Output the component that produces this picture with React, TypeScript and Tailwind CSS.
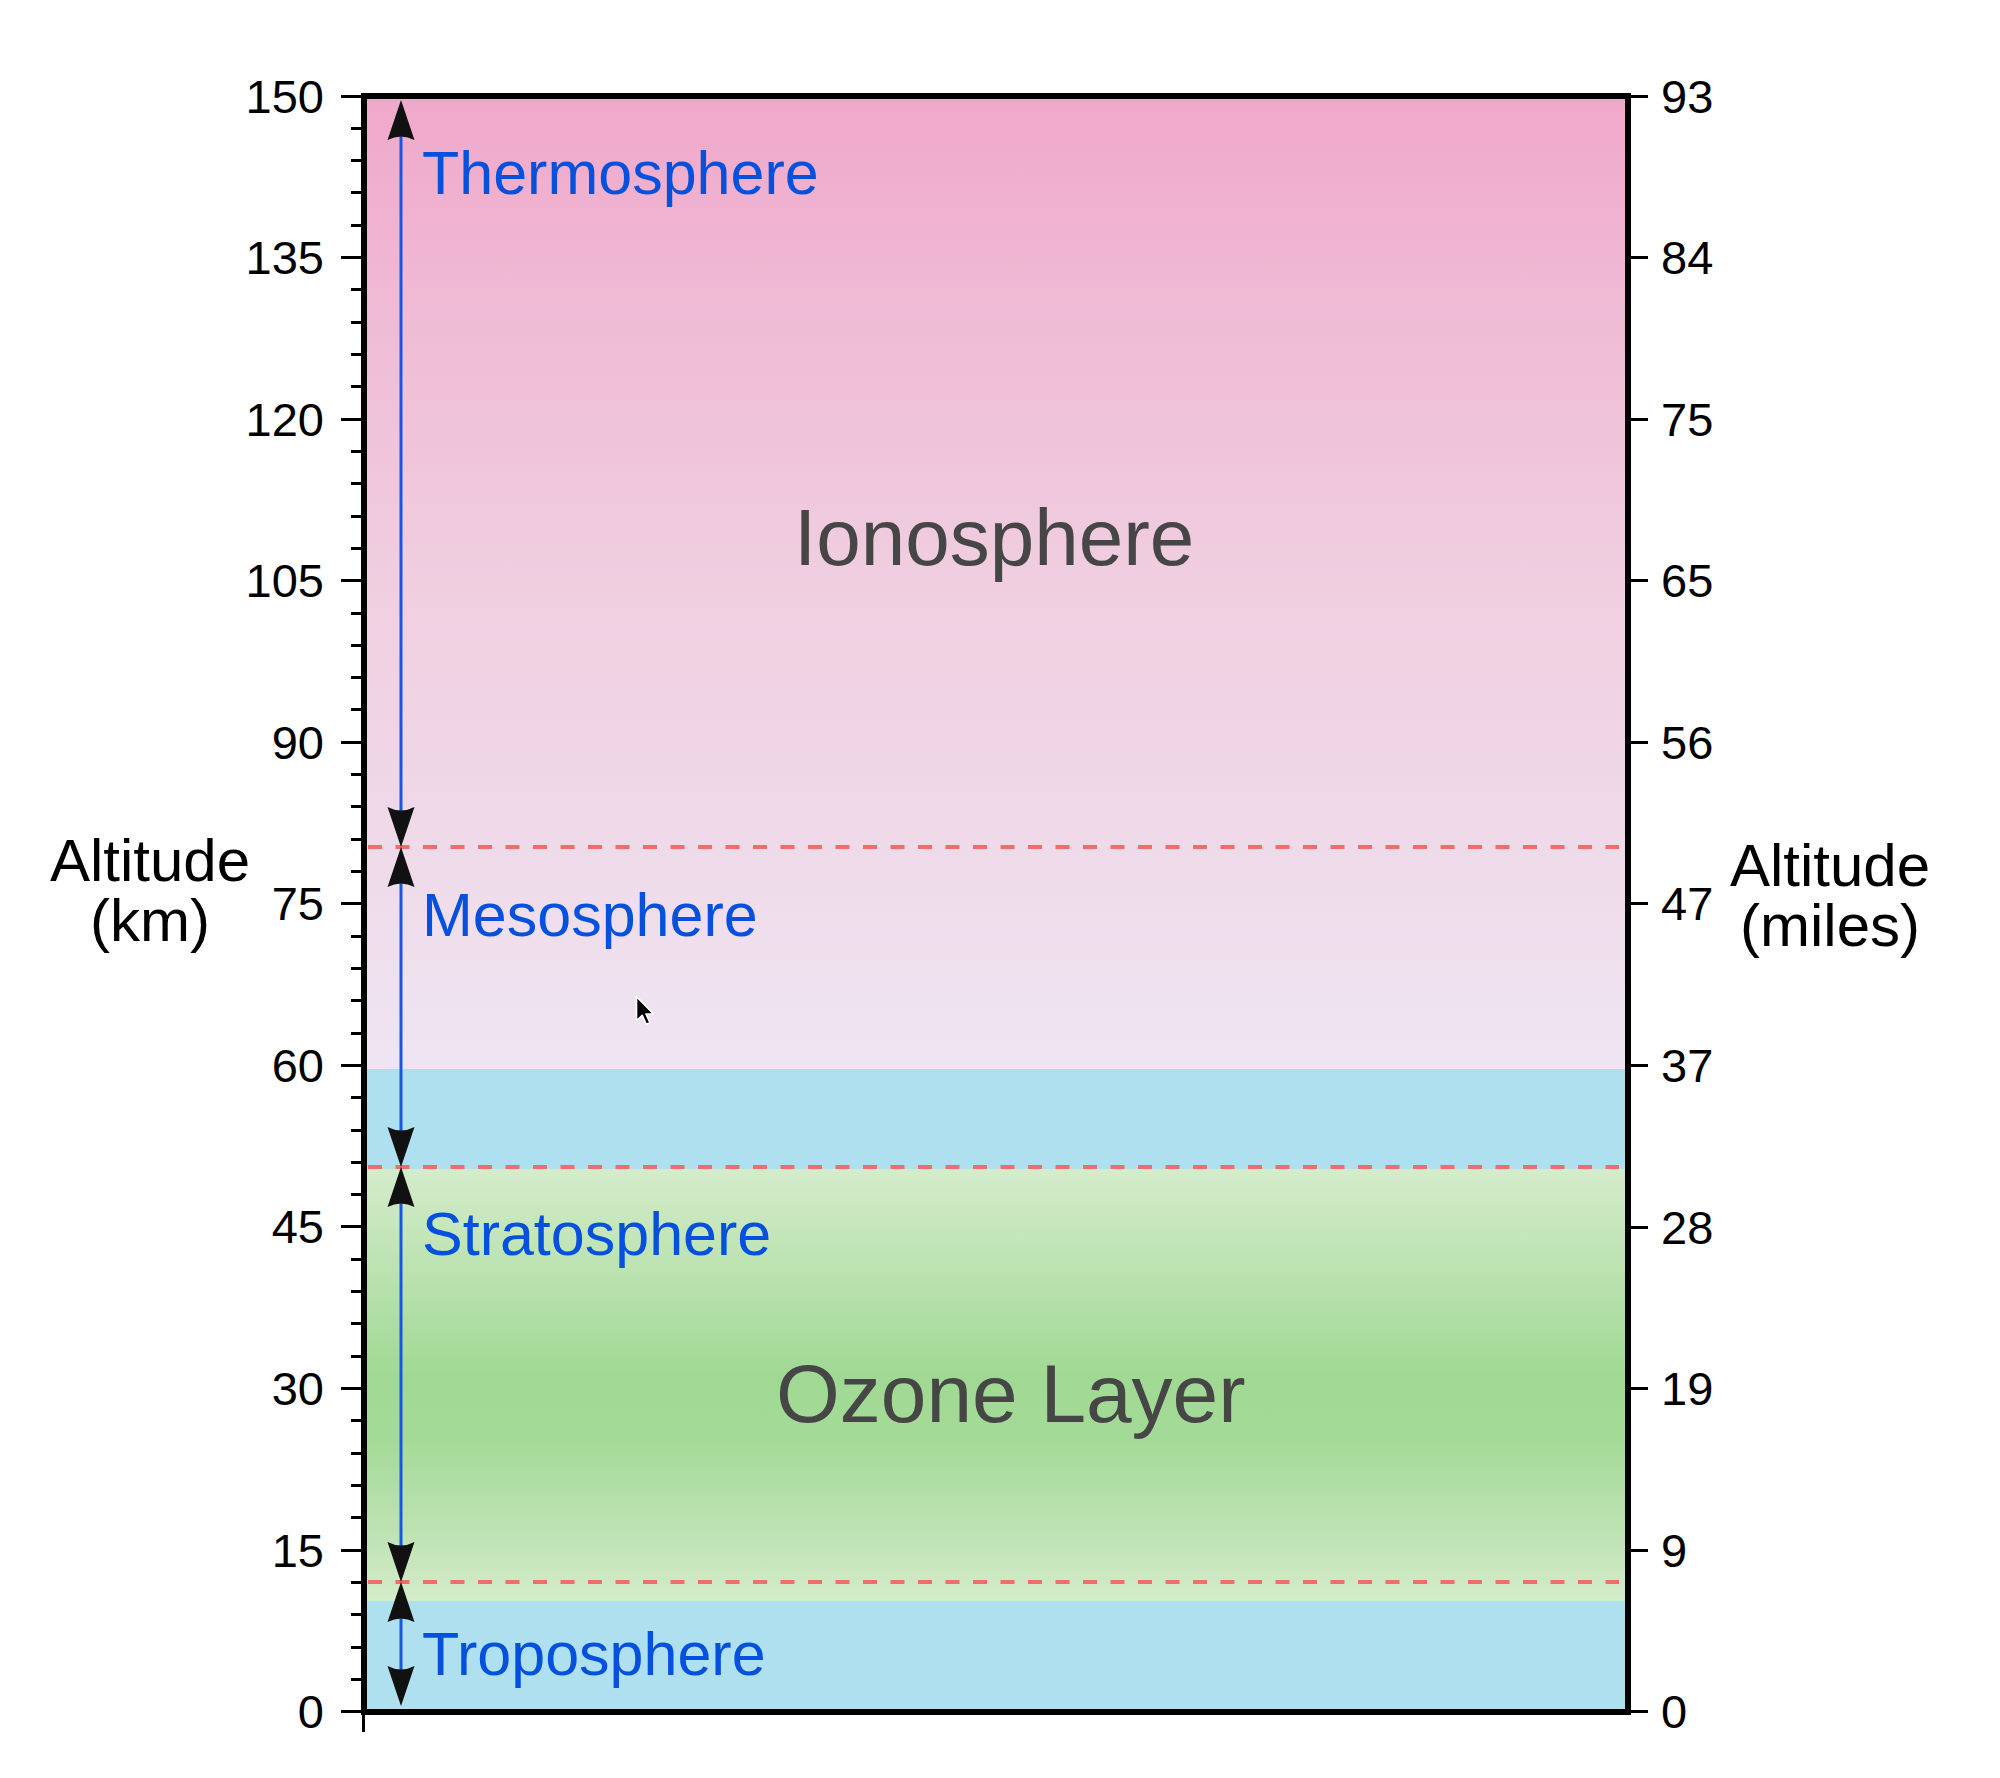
const KM_MAJOR = [150, 135, 120, 105, 90, 75, 60, 45, 30, 15, 0];
const MILES = [93, 84, 75, 65, 56, 47, 37, 28, 19, 9, 0];
const KM_STEPS = Array.from({ length: 51 }, (_, i) => 150 - i * 3);

// arrow spans inside the plot, in px from the inner top edge
const SPANS: [number, number][] = [
  [1, 748],
  [748, 1068],
  [1068, 1483],
  [1483, 1607],
];
const BOUNDARIES = [748, 1068, 1483];
const ARROW_X = 34;

function Arrow({ from, to }: { from: number; to: number }) {
  const x = ARROW_X;
  return (
    <g>
      <line x1={x} y1={from + 36} x2={x} y2={to - 36} stroke="#1a56e2" strokeWidth={3} />
      <path d={`M${x} ${from} L${x + 13.5} ${from + 40} Q${x} ${from + 33} ${x - 13.5} ${from + 40} Z`} fill="#111" />
      <path d={`M${x} ${to} L${x + 13.5} ${to - 40} Q${x} ${to - 33} ${x - 13.5} ${to - 40} Z`} fill="#111" />
    </g>
  );
}

function Cursor() {
  return (
    <svg className="absolute left-[268px] top-[896px]" width="20" height="31" viewBox="0 0 13 20">
      <path
        d="M1 1 L1 16.6 L4.7 13.1 L7.3 18.9 L9.7 17.9 L7.1 12.3 L12 12.3 Z"
        fill="#000"
        stroke="#fff"
        strokeWidth="1"
        strokeLinejoin="round"
      />
    </svg>
  );
}

function LayerName({ children, className }: { children: string; className: string }) {
  return <div className={`text-[61px] leading-none text-[#0551de] ${className}`}>{children}</div>;
}

function Plot() {
  return (
    <div className="relative flex h-[1622px] w-[1270px] shrink-0 flex-col border-[6px] border-black">
      <div className="flex h-[970px] flex-col items-start bg-[linear-gradient(to_bottom,#f0a8ca_0%,#efbdd6_25%,#f0cee0_50%,#efd9e8_75%,#efe5f2_100%)]">
        <LayerName className="ml-[55px] mt-[44px]">Thermosphere</LayerName>
        <div className="ml-[427px] mt-[294px] text-[80px] leading-none text-[#464646]">Ionosphere</div>
        <LayerName className="ml-[55px] mt-[307px]">Mesosphere</LayerName>
      </div>
      <div className="h-[100px] bg-[#aee0f0]" />
      <div className="flex h-[432px] flex-col items-start bg-[linear-gradient(to_bottom,#d4ecca_0%,#bde3b2_22%,#a0d994_48%,#a3da97_62%,#bfe3b4_85%,#d4ecca_100%)]">
        <LayerName className="ml-[55px] mt-[35px]">Stratosphere</LayerName>
        <div className="ml-[409px] mt-[88px] text-[82px] leading-none text-[#464646]">Ozone Layer</div>
      </div>
      <div className="flex flex-1 flex-col items-start bg-[#aee0f0]">
        <LayerName className="ml-[55px] mt-[23px]">Troposphere</LayerName>
      </div>

      <svg className="pointer-events-none absolute inset-0 overflow-visible" width="1258" height="1610">
        {BOUNDARIES.map((y) => (
          <line key={y} x1={1} y1={y} x2={1252} y2={y} stroke="#f26c6c" strokeWidth={4} strokeDasharray="14 13.5" />
        ))}
        {SPANS.map(([a, b]) => (
          <Arrow key={a} from={a} to={b} />
        ))}
      </svg>

      <Cursor />

      {/* small tick below the bottom-left corner */}
      <div className="absolute left-[-5px] top-[1616px] h-[17px] w-[3px] bg-black" />
    </div>
  );
}

function LeftAxis() {
  return (
    <div className="h-[1622px] w-[61px] shrink-0 pt-[3px]">
      <div className="flex h-[1616px] flex-col justify-between">
        {KM_STEPS.map((km) =>
          km % 15 === 0 ? (
            <div key={km} className="flex h-0 items-center justify-end">
              <span className="text-[47px] leading-none text-black">{km}</span>
              <span className="ml-[17px] h-[3px] w-[20px] shrink-0 bg-black" />
            </div>
          ) : (
            <div key={km} className="flex h-0 items-center justify-end">
              <span className="h-[3px] w-[10px] shrink-0 bg-black" />
            </div>
          ),
        )}
      </div>
    </div>
  );
}

function RightAxis() {
  return (
    <div className="h-[1622px] w-[90px] shrink-0 pt-[3px]">
      <div className="flex h-[1616px] flex-col justify-between">
        {KM_MAJOR.map((km, i) => (
          <div key={km} className="flex h-0 items-center">
            <span className="h-[3px] w-[17px] shrink-0 bg-black" />
            <span className="ml-[13px] text-[47px] leading-none text-black">{MILES[i]}</span>
          </div>
        ))}
      </div>
    </div>
  );
}

function AxisTitle({ unit, className }: { unit: string; className: string }) {
  return (
    <div className={`shrink-0 text-center text-[60px] leading-[60px] text-black ${className}`}>
      <div>Altitude</div>
      <div>({unit})</div>
    </div>
  );
}

export default function App() {
  return (
    <div className="h-[1778px] w-[2000px] overflow-hidden bg-white font-['Liberation_Sans',Arial,sans-serif]">
      <div className="flex items-start pt-[93px]">
        <AxisTitle unit="km" className="w-[300px] pt-[738px]" />
        <LeftAxis />
        <Plot />
        <RightAxis />
        <AxisTitle unit="miles" className="w-[218px] pt-[743px]" />
      </div>
    </div>
  );
}
